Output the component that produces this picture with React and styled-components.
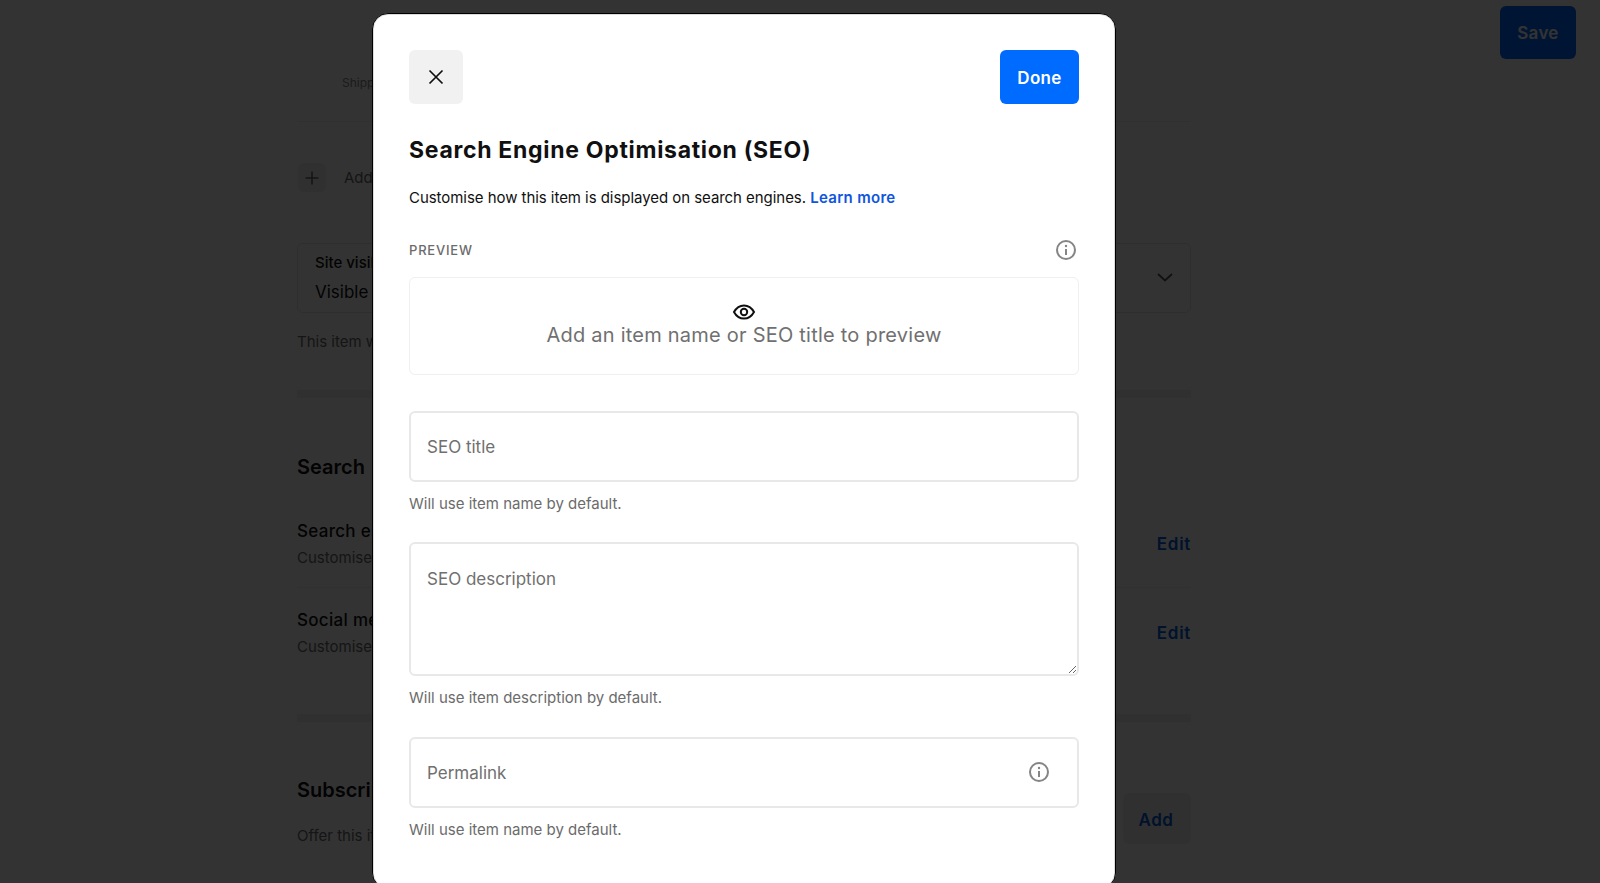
import React from 'react';
import styled, { createGlobalStyle } from 'styled-components';

const GlobalStyle = createGlobalStyle`
  html, body {
    margin: 0;
    padding: 0;
    height: 100%;
    overflow: hidden;
    background: #ffffff;
  }
  * {
    box-sizing: border-box;
  }
  body {
    font-family: Inter, "Liberation Sans", sans-serif;
    color: #101010;
  }
`;

const Page = styled.div`
  display: flex;
  align-items: flex-start;
  height: 100vh;
  overflow: hidden;
`;

const Column = styled.main`
  width: 894px;
  margin-left: 297px;
  padding-top: 73px;
  flex-shrink: 0;
`;

const SaveButton = styled.button`
  width: 76px;
  height: 53px;
  margin: 6px 0 0 309px;
  border: none;
  border-radius: 6px;
  background: #006bff;
  color: #ffffff;
  font: 600 17px Inter, sans-serif;
  letter-spacing: 0.3px;
`;

const Note = styled.p`
  margin: 0 0 0 45px;
  font-size: 12px;
  line-height: 20px;
  color: #8a8a8a;
`;

const Rule = styled.hr`
  margin: ${(props) => props.$top}px 0 0;
  border: none;
  height: ${(props) => (props.$thick ? 8 : 1)}px;
  background: #f0f0f0;
`;

const AddRow = styled.div`
  display: flex;
  align-items: center;
  gap: 18px;
  margin-top: 41px;
  padding-left: 1px;
  height: 29px;
  font-size: 15px;
  color: #6b6b6b;
`;

const PlusButton = styled.span`
  display: flex;
  align-items: center;
  justify-content: center;
  width: 28px;
  height: 29px;
  border-radius: 6px;
  background: #f0f0f0;
  color: #666666;
`;

const SelectBox = styled.div`
  display: flex;
  align-items: center;
  justify-content: space-between;
  height: 70px;
  margin-top: 51px;
  padding: 0 16px 2px 17px;
  border: 1px solid #e4e4e4;
  border-radius: 6px;
`;

const SelectLabel = styled.div`
  font-size: 15px;
  font-weight: 500;
  line-height: 20px;
  padding-top: 4px;
`;

const SelectValue = styled.div`
  font-size: 17px;
  line-height: 28px;
  margin-top: 5px;
`;

const HelpText = styled.p`
  margin: ${(props) => props.$top}px 0 0;
  font-size: 15px;
  line-height: 20px;
  color: #6b6b6b;
`;

const SectionTitle = styled.h2`
  margin: ${(props) => props.$top}px 0 0;
  font-size: 20px;
  font-weight: 600;
  line-height: 28px;
`;

const SettingRow = styled.div`
  display: flex;
  align-items: center;
  justify-content: space-between;
  margin-top: ${(props) => props.$top}px;
`;

const SettingName = styled.div`
  font-size: 17px;
  font-weight: 500;
  line-height: 24px;
  letter-spacing: 0.3px;
  margin-bottom: 5px;
`;

const SettingText = styled.div`
  font-size: 15px;
  line-height: 20px;
  color: #6b6b6b;
`;

const LinkText = styled.span`
  font-size: 17px;
  font-weight: 600;
  letter-spacing: 0.7px;
  color: #005ad9;
`;

const SubscriptionRow = styled.div`
  display: flex;
  justify-content: space-between;
  align-items: flex-start;
  margin-top: 54px;
`;

const AddButton = styled.span`
  display: flex;
  align-items: center;
  justify-content: center;
  width: 68px;
  height: 51px;
  margin-top: 17px;
  padding: 2px 2px 0 0;
  border-radius: 6px;
  background: #f0f0f0;
  font-size: 17px;
  font-weight: 600;
  letter-spacing: 0.5px;
  color: #005ad9;
`;

const Overlay = styled.div`
  position: fixed;
  inset: 0;
  padding: 13px 0 0 372px;
  background: rgba(0, 0, 0, 0.8);
  overflow: hidden;
`;

const Modal = styled.section`
  width: 744px;
  height: 876px;
  padding: 36px;
  border: 1px solid #000000;
  border-radius: 16px;
  background: #ffffff;
  box-shadow: inset 0 0 0 1px #dcdcdc;
`;

const ModalHeader = styled.header`
  display: flex;
  justify-content: space-between;
  height: 54px;
`;

const CloseButton = styled.button`
  display: flex;
  align-items: center;
  justify-content: center;
  width: 54px;
  height: 54px;
  padding: 0;
  border: none;
  border-radius: 6px;
  background: #f1f1f1;
  color: #101010;
`;

const DoneButton = styled.button`
  width: 79px;
  height: 54px;
  padding: 1px 0 0;
  border: none;
  border-radius: 6px;
  background: #006bff;
  color: #ffffff;
  font: 600 17px Inter, sans-serif;
  letter-spacing: 0.3px;
`;

const Title = styled.h1`
  margin: 30px 0 0;
  font-size: 23px;
  font-weight: 700;
  line-height: 32px;
  letter-spacing: 0.7px;
  color: #101010;
`;

const Description = styled.p`
  margin: 21px 0 0;
  font-size: 15px;
  line-height: 22px;
  letter-spacing: -0.05px;
  color: #101010;
`;

const LearnMore = styled.a`
  font-weight: 600;
  letter-spacing: 0.3px;
  color: #0f55dd;
`;

const PreviewHeader = styled.div`
  display: flex;
  align-items: center;
  justify-content: space-between;
  height: 20px;
  margin-top: 31px;
  padding-right: 2px;
`;

const PreviewLabel = styled.span`
  font-size: 13px;
  font-weight: 500;
  letter-spacing: 0.8px;
  color: #6b6b6b;
`;

const InfoGlyph = styled.svg`
  display: block;
  width: 22px;
  height: 22px;
  color: #858585;
`;

const PreviewBox = styled.div`
  display: flex;
  flex-direction: column;
  align-items: center;
  height: 98px;
  margin-top: 17px;
  padding-top: 22px;
  border: 1px solid #f0f0f0;
  border-radius: 6px;
`;

const PreviewHint = styled.span`
  margin-top: -1px;
  font-size: 20px;
  line-height: 24px;
  letter-spacing: 0.23px;
  color: #707070;
`;

const Field = styled.div`
  position: relative;
  margin-top: ${(props) => props.$top}px;
`;

const TextInput = styled.input`
  display: block;
  width: 100%;
  height: 71px;
  padding: 0 16px;
  border: 2px solid #e8e8e8;
  border-radius: 6px;
  font: 400 17px Inter, sans-serif;
  outline: none;
  &::placeholder {
    color: #707070;
    opacity: 1;
  }
`;

const TextArea = styled.textarea`
  display: block;
  width: 100%;
  height: 134px;
  padding: 24px 16px;
  border: 2px solid #e8e8e8;
  border-radius: 6px;
  font: 400 17px/22px Inter, sans-serif;
  outline: none;
  &::placeholder {
    color: #707070;
    opacity: 1;
  }
`;

const FieldIcon = styled.span`
  position: absolute;
  top: 24px;
  right: 29px;
`;

const Hint = styled.p`
  margin: ${(props) => props.$top}px 0 0;
  font-size: 15px;
  line-height: 20px;
  color: #6b6b6b;
`;

const InfoIcon = () => (
  <InfoGlyph viewBox="0 0 22 22" fill="none" stroke="currentColor" strokeWidth="2">
    <circle cx="11" cy="11" r="9" />
    <path d="M11 10v6" strokeWidth="2" />
    <circle cx="11" cy="7" r="1.2" fill="currentColor" stroke="none" />
  </InfoGlyph>
);

const App = () => (
  <>
    <GlobalStyle />
    <Page>
      <Column>
        <Note>Shipping options</Note>
        <Rule $top={28} />
        <AddRow>
          <PlusButton>
            <svg width="16" height="16" viewBox="0 0 16 16" fill="none" stroke="currentColor" strokeWidth="1.6">
              <path d="M8 1.5v13M1.5 8h13" />
            </svg>
          </PlusButton>
          Add
        </AddRow>
        <SelectBox>
          <div>
            <SelectLabel>Site visibility</SelectLabel>
            <SelectValue>Visible</SelectValue>
          </div>
          <svg width="18" height="18" viewBox="0 0 18 18" fill="none" stroke="#555" strokeWidth="1.8">
            <path d="M2 6l7 6.5L16 6" />
          </svg>
        </SelectBox>
        <HelpText $top={19}>This item will be visible</HelpText>
        <Rule $top={38} $thick />
        <SectionTitle $top={55}>Search</SectionTitle>
        <SettingRow $top={38}>
          <div>
            <SettingName>Search engine</SettingName>
            <SettingText>Customise</SettingText>
          </div>
          <LinkText>Edit</LinkText>
        </SettingRow>
        <Rule $top={19} />
        <SettingRow $top={20}>
          <div>
            <SettingName>Social media</SettingName>
            <SettingText>Customise</SettingText>
          </div>
          <LinkText>Edit</LinkText>
        </SettingRow>
        <Rule $top={57} $thick />
        <SubscriptionRow>
          <div>
            <SectionTitle $top={0}>Subscriptions</SectionTitle>
            <HelpText $top={22}>Offer this item</HelpText>
          </div>
          <AddButton>Add</AddButton>
        </SubscriptionRow>
      </Column>
      <SaveButton>Save</SaveButton>
    </Page>
    <Overlay>
      <Modal>
        <ModalHeader>
          <CloseButton aria-label="Close">
            <svg width="16" height="16" viewBox="0 0 16 16" fill="none" stroke="currentColor" strokeWidth="1.7">
              <path d="M1.5 1.5l13 13M14.5 1.5l-13 13" />
            </svg>
          </CloseButton>
          <DoneButton>Done</DoneButton>
        </ModalHeader>
        <Title>Search Engine Optimisation (SEO)</Title>
        <Description>
          Customise how this item is displayed on search engines. <LearnMore>Learn more</LearnMore>
        </Description>
        <PreviewHeader>
          <PreviewLabel>PREVIEW</PreviewLabel>
          <InfoIcon />
        </PreviewHeader>
        <PreviewBox>
          <svg width="24" height="24" viewBox="0 0 24 24" fill="none" stroke="#101010" strokeWidth="2">
            <path d="M2 12c2.4-4.4 5.8-6.6 10-6.6s7.600 2.200 10 6.600c-2.400 4.400-5.800 6.600-10 6.600S4.400 16.400 2 12z" />
            <circle cx="12" cy="12" r="3.200" />
          </svg>
          <PreviewHint>Add an item name or SEO title to preview</PreviewHint>
        </PreviewBox>
        <Field $top={36}>
          <TextInput placeholder="SEO title" />
        </Field>
        <Hint $top={12}>Will use item name by default.</Hint>
        <Field $top={28}>
          <TextArea placeholder="SEO description" />
        </Field>
        <Hint $top={12}>Will use item description by default.</Hint>
        <Field $top={29}>
          <TextInput placeholder="Permalink" />
          <FieldIcon>
            <InfoIcon />
          </FieldIcon>
        </Field>
        <Hint $top={12}>Will use item name by default.</Hint>
      </Modal>
    </Overlay>
  </>
);

export default App;
